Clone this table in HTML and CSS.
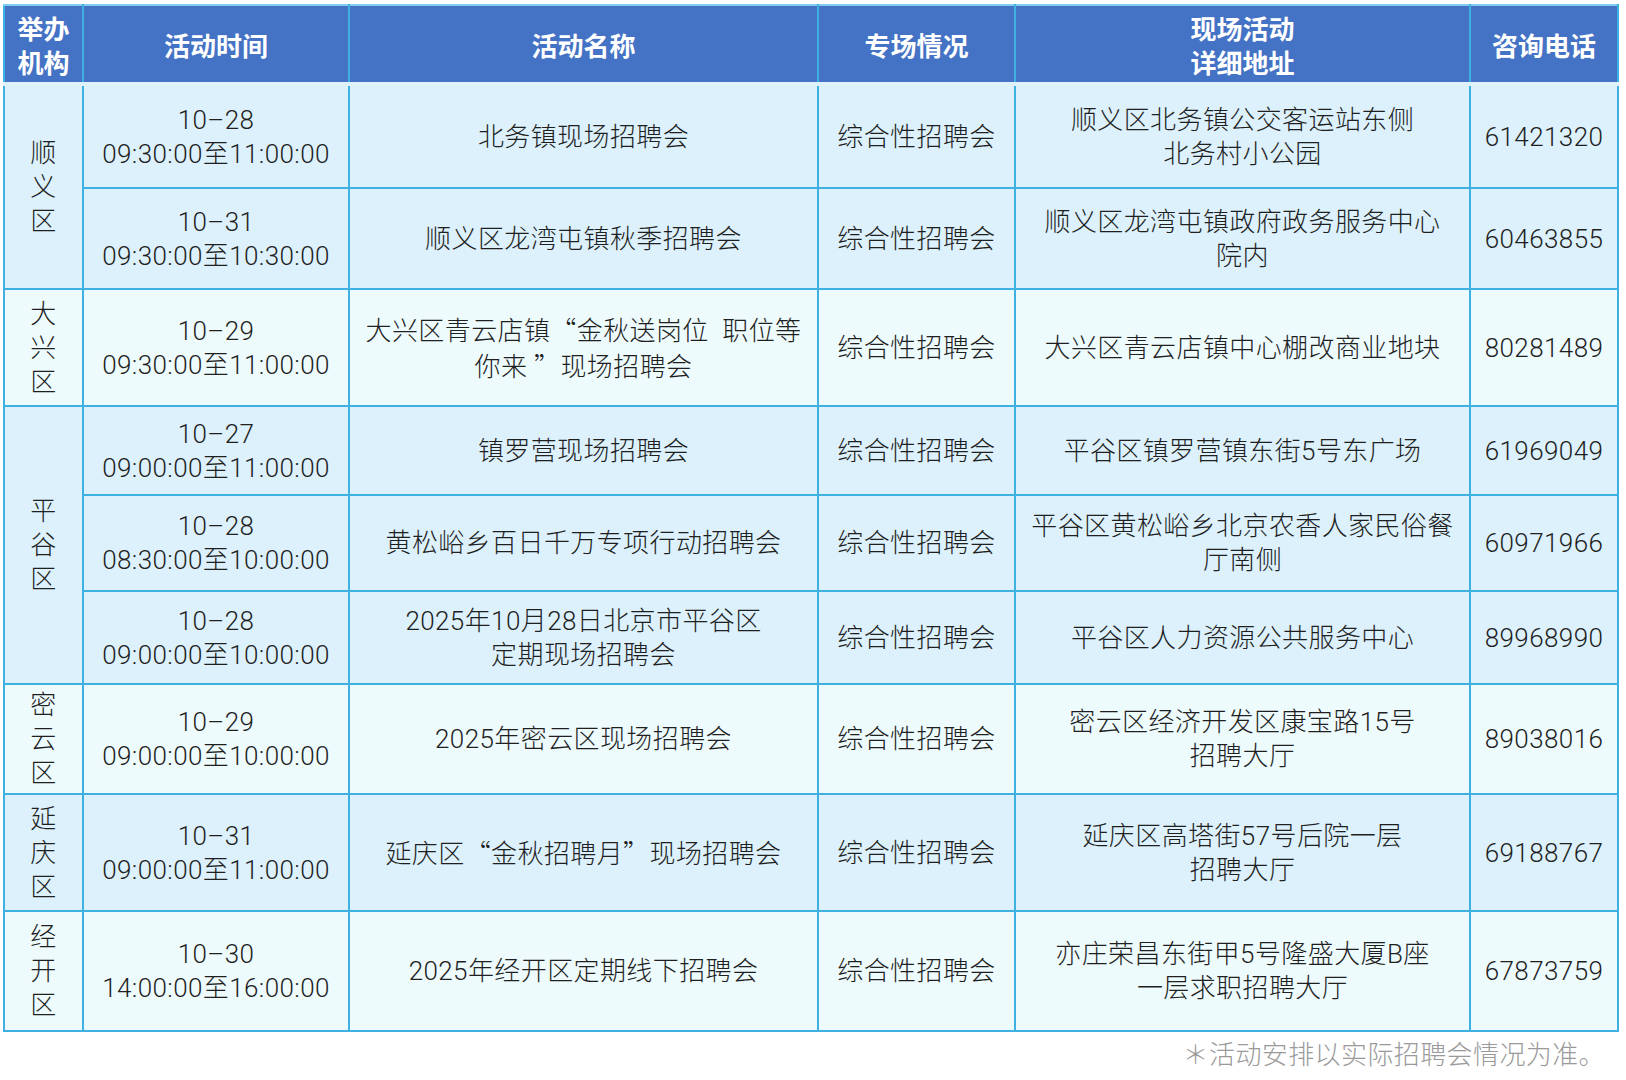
FILE: index.html
```html
<!DOCTYPE html>
<html lang="zh-CN">
<head>
<meta charset="utf-8">
<title>招聘会安排</title>
<link rel="stylesheet" href="styles.css">
</head>
<body>
<div class="page">
<table class="sched">
<colgroup>
<col class="c1"><col class="c2"><col class="c3"><col class="c4"><col class="c5"><col class="c6">
</colgroup>
<thead>
<tr class="rh">
<th>举办<br>机构</th><th>活动时间</th><th>活动名称</th><th>专场情况</th><th>现场活动<br>详细地址</th><th>咨询电话</th>
</tr>
</thead>
<tbody>
<tr class="r1 blue">
<td rowspan="2" class="org">顺<br>义<br>区</td>
<td>10–28<br>09:30:00至11:00:00</td>
<td>北务镇现场招聘会</td>
<td>综合性招聘会</td>
<td>顺义区北务镇公交客运站东侧<br>北务村小公园</td>
<td>61421320</td>
</tr>
<tr class="r2 blue">
<td>10–31<br>09:30:00至10:30:00</td>
<td>顺义区龙湾屯镇秋季招聘会</td>
<td>综合性招聘会</td>
<td>顺义区龙湾屯镇政府政务服务中心<br>院内</td>
<td>60463855</td>
</tr>
<tr class="r3 light">
<td class="org">大<br>兴<br>区</td>
<td>10–29<br>09:30:00至11:00:00</td>
<td>大兴区青云店镇<span class="q">“</span>金秋送岗位&nbsp;&nbsp;职位等<br>你来 <span class="q">”</span>现场招聘会</td>
<td>综合性招聘会</td>
<td>大兴区青云店镇中心棚改商业地块</td>
<td>80281489</td>
</tr>
<tr class="r4 blue">
<td rowspan="3" class="org">平<br>谷<br>区</td>
<td>10–27<br>09:00:00至11:00:00</td>
<td>镇罗营现场招聘会</td>
<td>综合性招聘会</td>
<td>平谷区镇罗营镇东街5号东广场</td>
<td>61969049</td>
</tr>
<tr class="r5 blue">
<td>10–28<br>08:30:00至10:00:00</td>
<td>黄松峪乡百日千万专项行动招聘会</td>
<td>综合性招聘会</td>
<td>平谷区黄松峪乡北京农香人家民俗餐<br>厅南侧</td>
<td>60971966</td>
</tr>
<tr class="r6 blue">
<td>10–28<br>09:00:00至10:00:00</td>
<td>2025年10月28日北京市平谷区<br>定期现场招聘会</td>
<td>综合性招聘会</td>
<td>平谷区人力资源公共服务中心</td>
<td>89968990</td>
</tr>
<tr class="r7 light">
<td class="org">密<br>云<br>区</td>
<td>10–29<br>09:00:00至10:00:00</td>
<td>2025年密云区现场招聘会</td>
<td>综合性招聘会</td>
<td>密云区经济开发区康宝路15号<br>招聘大厅</td>
<td>89038016</td>
</tr>
<tr class="r8 blue">
<td class="org">延<br>庆<br>区</td>
<td>10–31<br>09:00:00至11:00:00</td>
<td>延庆区<span class="q">“</span>金秋招聘月<span class="q">”</span>现场招聘会</td>
<td>综合性招聘会</td>
<td>延庆区高塔街57号后院一层<br>招聘大厅</td>
<td>69188767</td>
</tr>
<tr class="r9 light">
<td class="org">经<br>开<br>区</td>
<td>10–30<br>14:00:00至16:00:00</td>
<td>2025年经开区定期线下招聘会</td>
<td>综合性招聘会</td>
<td>亦庄荣昌东街甲5号隆盛大厦B座<br>一层求职招聘大厅</td>
<td>67873759</td>
</tr>
</tbody>
</table>
<p class="note">＊活动安排以实际招聘会情况为准。</p>
</div>
</body>
</html>
```
FILE: styles.css
```css
html, body {
  margin: 0;
  padding: 0;
  background: #ffffff;
}
.page {
  padding: 4px 0 0 3px;
  font-family: "Roboto", "Liberation Sans", "Noto Sans CJK SC", sans-serif;
}
.sched {
  width: 1614px;
  table-layout: fixed;
  border-collapse: collapse;
  border: 2px solid #3fb0e2;
}
.c1 { width: 79px; }
.c2 { width: 266px; }
.c3 { width: 469px; }
.c4 { width: 197px; }
.c5 { width: 455px; }
.c6 { width: 148px; }
.sched th {
  background: #4472c4;
  color: #ffffff;
  font-family: "Noto Sans CJK SC", sans-serif;
  font-size: 26px;
  font-weight: 700;
  line-height: 34px;
  text-align: center;
  border-left: 2px solid #3fb0e2;
  border-right: 2px solid #3fb0e2;
  border-top: 2px solid #7fcdf0;
  border-bottom: 4px solid #dff2fc;
  padding: 2px 0 0 0;
  box-shadow: inset 0 -2px 0 #4472c4;
}
.sched td {
  font-size: 26px;
  font-weight: 300;
  line-height: 34px;
  letter-spacing: 0.4px;
  color: #1f1f1f;
  text-align: center;
  vertical-align: middle;
  border: 2px solid #3fb0e2;
  padding: 0;
  white-space: nowrap;
}
.q {
  font-family: "Noto Sans CJK SC", sans-serif;
}
.blue td { background: #dcf1fc; }
.light td { background: #eefbfd; }
.rh { height: 79px; }
.r1 { height: 104px; }
.r2 { height: 101px; }
.r3 { height: 117px; }
.r4 { height: 89px; }
.r5 { height: 96px; }
.r6 { height: 93px; }
.r7 { height: 110px; }
.r8 { height: 117px; }
.r9 { height: 120px; }
.note {
  margin: 6px 0 0 0;
  width: 1602px;
  text-align: right;
  font-size: 26px;
  line-height: 34px;
  letter-spacing: 0.4px;
  color: #9a9a9a;
  font-weight: 300;
}
```
